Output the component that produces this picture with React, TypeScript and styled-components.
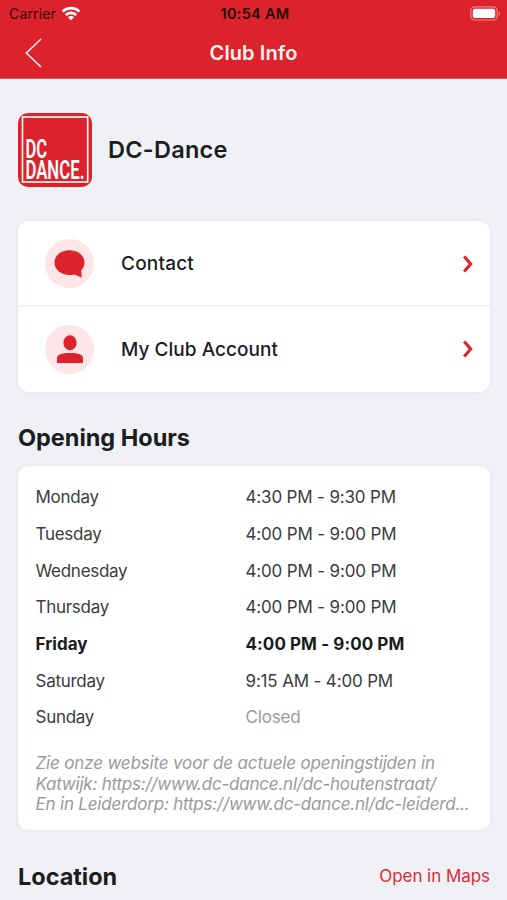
import React from "react";
import styled, { createGlobalStyle } from "styled-components";

const RED = "#dc232b";

const GlobalStyle = createGlobalStyle`
  *, *::before, *::after { box-sizing: border-box; }
  html, body { margin: 0; padding: 0; background: #eff1f5; }
  body {
    font-family: Inter, "Liberation Sans", sans-serif;
    color: #1c1d1f;
    overflow: hidden;
  }
`;

const Screen = styled.div`
  width: 507px;
  height: 900px;
  overflow: hidden;
  background: #eff1f5;
`;

const Header = styled.header`
  height: 79px;
  background: ${RED};
  border-bottom: 1px solid #e2575e;
`;

const StatusBar = styled.div`
  height: 27px;
  display: grid;
  grid-template-columns: 1fr auto 1fr;
  align-items: center;
  padding: 0 6px 0 9px;
  color: #35080a;
`;

const Carrier = styled.div`
  display: flex;
  align-items: center;
  gap: 5px;
  font-size: 14px;
  letter-spacing: 0.15px;
`;

const Clock = styled.div`
  font-size: 14.5px;
  font-weight: 600;
  letter-spacing: 0.3px;
  color: #240507;
`;

const Battery = styled.svg`
  justify-self: end;
  display: block;
`;

const NavBar = styled.div`
  height: 51px;
  display: grid;
  grid-template-columns: 1fr auto 1fr;
  align-items: center;
  padding-left: 24px;
  padding-right: 24px;
`;

const NavTitle = styled.h1`
  margin: 0;
  font-size: 20px;
  font-weight: 600;
  line-height: 24px;
  letter-spacing: 0.1px;
  color: #fff3f2;
`;

const Content = styled.main`
  padding: 34px 17px 0 18px;
`;

const ClubRow = styled.section`
  display: flex;
  align-items: center;
  gap: 16px;
  height: 74px;
`;

const ClubName = styled.h2`
  margin: 0;
  font-size: 23.5px;
  line-height: 28px;
  font-weight: 600;
  letter-spacing: 0.25px;
`;

const Card = styled.section`
  background: #fff;
  border-radius: 11px;
  box-shadow: 0 0 4px rgba(40, 50, 80, 0.07);
`;

const MenuCard = styled(Card)`
  margin-top: 34px;
  height: 171px;
`;

const MenuItem = styled.div`
  display: flex;
  align-items: center;
  height: 84px;
  padding: 1px 17px 0 27px;

  & + & {
    height: 86px;
    padding-top: 0;
    border-top: 2px solid #eff0f2;
  }
`;

const IconBubble = styled.div`
  width: 49px;
  height: 49px;
  border-radius: 50%;
  background: #fce6e8;
  display: flex;
  align-items: center;
  justify-content: center;
`;

const MenuLabel = styled.span<{ $spacing: number }>`
  flex: 1;
  margin-left: 27px;
  font-size: 19px;
  font-weight: 500;
  letter-spacing: ${(p) => p.$spacing}px;
`;

const SectionHead = styled.div<{ $top: number }>`
  display: flex;
  align-items: center;
  justify-content: space-between;
  height: 30px;
  margin-top: ${(p) => p.$top}px;
`;

const SectionTitle = styled.h2`
  margin: 0;
  font-size: 23.5px;
  font-weight: 700;
  letter-spacing: -0.03px;
`;

const MapLink = styled.span`
  color: #d92c38;
  font-size: 17px;
  letter-spacing: -0.05px;
`;

const HoursCard = styled(Card)`
  margin-top: 14px;
  height: 364px;
  padding: 13px 17px 0 17.5px;
`;

const HoursRow = styled.div<{ $today?: boolean }>`
  display: grid;
  grid-template-columns: 210px 1fr;
  align-items: center;
  height: 36.65px;
  font-size: 17px;
  color: ${(p) => (p.$today ? "#1a1b1d" : "#3b3c3e")};
  font-weight: ${(p) => (p.$today ? 700 : 400)};
  letter-spacing: ${(p) => (p.$today ? 0.03 : -0.28)}px;
`;

const Time = styled.span<{ $today?: boolean; $closed?: boolean }>`
  color: ${(p) => (p.$closed ? "#999a9b" : "inherit")};
  letter-spacing: ${(p) => (p.$today ? 0.08 : -0.16)}px;
`;

const Note = styled.p`
  margin: 18px 0 0;
  font-size: 17px;
  line-height: 20.3px;
  font-style: italic;
  color: #999a9c;
  white-space: nowrap;
`;

const NoteLine = styled.span<{ $spacing: number }>`
  display: block;
  letter-spacing: ${(p) => p.$spacing}px;
`;

const hours = [
  { day: "Monday", time: "4:30 PM - 9:30 PM" },
  { day: "Tuesday", time: "4:00 PM - 9:00 PM" },
  { day: "Wednesday", time: "4:00 PM - 9:00 PM" },
  { day: "Thursday", time: "4:00 PM - 9:00 PM" },
  { day: "Friday", time: "4:00 PM - 9:00 PM", today: true },
  { day: "Saturday", time: "9:15 AM - 4:00 PM" },
  { day: "Sunday", time: "Closed", closed: true },
];

const WifiIcon = () => (
  <svg width="20" height="15" viewBox="0 0 20 15" fill="none" stroke="#fff" strokeWidth="2.8">
    <path d="M1.6 5.6C6.3 0.9 13.7 0.9 18.4 5.6" />
    <path d="M4.8 9C7.7 6.1 12.3 6.1 15.2 9" />
    <path d="M10 14.2L6.9 11.2C8.6 9.6 11.4 9.6 13.1 11.2Z" fill="#fff" stroke="none" />
  </svg>
);

const BatteryIcon = () => (
  <Battery width="31" height="15" viewBox="0 0 31 15">
    <rect x="0.8" y="0.8" width="26.4" height="13.2" rx="3.8" fill="none" stroke="#ee7f85" strokeWidth="1.2" />
    <rect x="2.8" y="2.8" width="22.4" height="9.2" rx="2" fill="#fff" />
    <path d="M28.6 5.2C30.4 6 30.4 8.8 28.6 9.6Z" fill="#ee7f85" />
  </Battery>
);

const BackIcon = () => (
  <svg width="18" height="30" viewBox="0 0 18 30" fill="none" stroke="#ffe9e8" strokeWidth="1.7">
    <path d="M17 1L2.4 15L17 29" />
  </svg>
);

const ClubLogo = () => (
  <svg width="74" height="74" viewBox="0 0 74 74">
    <rect width="74" height="74" rx="10" fill={RED} />
    <rect x="4.5" y="4" width="65.2" height="65" fill="none" stroke="#fff" strokeWidth="1.6" />
    <g fill="#fff" fontFamily='Roboto, "Liberation Sans", sans-serif' fontSize="25" fontWeight="600">
      <text x="7.4" y="45.2" textLength="21.6" lengthAdjust="spacingAndGlyphs">DC</text>
      <text x="7.4" y="65.8" textLength="59" lengthAdjust="spacingAndGlyphs">DANCE.</text>
    </g>
  </svg>
);

const ChatIcon = () => (
  <svg width="31" height="28" viewBox="0 0 31 28" fill={RED}>
    <path d="M15.5 0.3C24 0.3 30.5 5.4 30.5 12.5C30.5 15.6 29.4 18 27.3 20.2L27.7 27.6L20.2 24.4C18.7 24.8 17.2 24.9 15.5 24.9C7 24.9 0.5 19.7 0.5 12.5C0.5 5.4 7 0.3 15.5 0.3Z" />
  </svg>
);

const PersonIcon = () => (
  <svg width="26" height="28" viewBox="0 0 26 28" fill={RED}>
    <ellipse cx="13" cy="7.7" rx="6.6" ry="7.5" />
    <path d="M0 28V23.5C0 19.5 4.5 18 13 18S26 19.5 26 23.5V28Z" />
  </svg>
);

const ChevronIcon = () => (
  <svg width="10" height="18" viewBox="0 0 10 18" fill="none" stroke={RED} strokeWidth="3.1">
    <path d="M1.2 1.6L7.7 9L1.2 16.4" />
  </svg>
);

export default function App() {
  return (
    <Screen>
      <GlobalStyle />
      <Header>
        <StatusBar>
          <Carrier>
            Carrier
            <WifiIcon />
          </Carrier>
          <Clock>10:54 AM</Clock>
          <BatteryIcon />
        </StatusBar>
        <NavBar>
          <BackIcon />
          <NavTitle>Club Info</NavTitle>
        </NavBar>
      </Header>
      <Content>
        <ClubRow>
          <ClubLogo />
          <ClubName>DC-Dance</ClubName>
        </ClubRow>
        <MenuCard>
          <MenuItem>
            <IconBubble><ChatIcon /></IconBubble>
            <MenuLabel $spacing={0.2}>Contact</MenuLabel>
            <ChevronIcon />
          </MenuItem>
          <MenuItem>
            <IconBubble><PersonIcon /></IconBubble>
            <MenuLabel $spacing={0.03}>My Club Account</MenuLabel>
            <ChevronIcon />
          </MenuItem>
        </MenuCard>
        <SectionHead $top={30}>
          <SectionTitle>Opening Hours</SectionTitle>
        </SectionHead>
        <HoursCard>
          {hours.map((h) => (
            <HoursRow key={h.day} $today={h.today}>
              <span>{h.day}</span>
              <Time $today={h.today} $closed={h.closed}>{h.time}</Time>
            </HoursRow>
          ))}
          <Note>
            <NoteLine $spacing={-0.16}>Zie onze website voor de actuele openingstijden in</NoteLine>
            <NoteLine $spacing={-0.22}>Katwijk: https://www.dc-dance.nl/dc-houtenstraat/</NoteLine>
            <NoteLine $spacing={-0.2}>En in Leiderdorp: https://www.dc-dance.nl/dc-leiderd...</NoteLine>
          </Note>
        </HoursCard>
        <SectionHead $top={31}>
          <SectionTitle>Location</SectionTitle>
          <MapLink>Open in Maps</MapLink>
        </SectionHead>
      </Content>
    </Screen>
  );
}
